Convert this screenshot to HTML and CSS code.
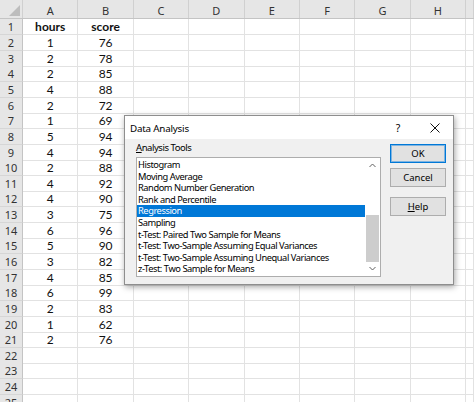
FILE: index.html
```html
<!DOCTYPE html>
<html>
<head>
<meta charset="utf-8">
<title>Data Analysis</title>
<link rel="stylesheet" href="styles.css">
</head>
<body>
<div class="app">
  <div class="sheet">
    <div class="row hdr"><div class="corner"><span class="tri"></span></div><div class="ch">A</div><div class="ch">B</div><div class="ch">C</div><div class="ch">D</div><div class="ch">E</div><div class="ch">F</div><div class="ch">G</div><div class="ch">H</div><div class="ch"></div></div>
    <div class="row"><div class="rh">1</div><div class="c b">hours</div><div class="c b">score</div><div class="c"></div><div class="c"></div><div class="c"></div><div class="c"></div><div class="c"></div><div class="c"></div><div class="c"></div></div>
    <div class="row"><div class="rh">2</div><div class="c">1</div><div class="c">76</div><div class="c"></div><div class="c"></div><div class="c"></div><div class="c"></div><div class="c"></div><div class="c"></div><div class="c"></div></div>
    <div class="row"><div class="rh">3</div><div class="c">2</div><div class="c">78</div><div class="c"></div><div class="c"></div><div class="c"></div><div class="c"></div><div class="c"></div><div class="c"></div><div class="c"></div></div>
    <div class="row"><div class="rh">4</div><div class="c">2</div><div class="c">85</div><div class="c"></div><div class="c"></div><div class="c"></div><div class="c"></div><div class="c"></div><div class="c"></div><div class="c"></div></div>
    <div class="row"><div class="rh">5</div><div class="c">4</div><div class="c">88</div><div class="c"></div><div class="c"></div><div class="c"></div><div class="c"></div><div class="c"></div><div class="c"></div><div class="c"></div></div>
    <div class="row"><div class="rh">6</div><div class="c">2</div><div class="c">72</div><div class="c"></div><div class="c"></div><div class="c"></div><div class="c"></div><div class="c"></div><div class="c"></div><div class="c"></div></div>
    <div class="row"><div class="rh">7</div><div class="c">1</div><div class="c">69</div><div class="c"></div><div class="c"></div><div class="c"></div><div class="c"></div><div class="c"></div><div class="c"></div><div class="c"></div></div>
    <div class="row"><div class="rh">8</div><div class="c">5</div><div class="c">94</div><div class="c"></div><div class="c"></div><div class="c"></div><div class="c"></div><div class="c"></div><div class="c"></div><div class="c"></div></div>
    <div class="row"><div class="rh">9</div><div class="c">4</div><div class="c">94</div><div class="c"></div><div class="c"></div><div class="c"></div><div class="c"></div><div class="c"></div><div class="c"></div><div class="c"></div></div>
    <div class="row"><div class="rh">10</div><div class="c">2</div><div class="c">88</div><div class="c"></div><div class="c"></div><div class="c"></div><div class="c"></div><div class="c"></div><div class="c"></div><div class="c"></div></div>
    <div class="row"><div class="rh">11</div><div class="c">4</div><div class="c">92</div><div class="c"></div><div class="c"></div><div class="c"></div><div class="c"></div><div class="c"></div><div class="c"></div><div class="c"></div></div>
    <div class="row"><div class="rh">12</div><div class="c">4</div><div class="c">90</div><div class="c"></div><div class="c"></div><div class="c"></div><div class="c"></div><div class="c"></div><div class="c"></div><div class="c"></div></div>
    <div class="row"><div class="rh">13</div><div class="c">3</div><div class="c">75</div><div class="c"></div><div class="c"></div><div class="c"></div><div class="c"></div><div class="c"></div><div class="c"></div><div class="c"></div></div>
    <div class="row"><div class="rh">14</div><div class="c">6</div><div class="c">96</div><div class="c"></div><div class="c"></div><div class="c"></div><div class="c"></div><div class="c"></div><div class="c"></div><div class="c"></div></div>
    <div class="row"><div class="rh">15</div><div class="c">5</div><div class="c">90</div><div class="c"></div><div class="c"></div><div class="c"></div><div class="c"></div><div class="c"></div><div class="c"></div><div class="c"></div></div>
    <div class="row"><div class="rh">16</div><div class="c">3</div><div class="c">82</div><div class="c"></div><div class="c"></div><div class="c"></div><div class="c"></div><div class="c"></div><div class="c"></div><div class="c"></div></div>
    <div class="row"><div class="rh">17</div><div class="c">4</div><div class="c">85</div><div class="c"></div><div class="c"></div><div class="c"></div><div class="c"></div><div class="c"></div><div class="c"></div><div class="c"></div></div>
    <div class="row"><div class="rh">18</div><div class="c">6</div><div class="c">99</div><div class="c"></div><div class="c"></div><div class="c"></div><div class="c"></div><div class="c"></div><div class="c"></div><div class="c"></div></div>
    <div class="row"><div class="rh">19</div><div class="c">2</div><div class="c">83</div><div class="c"></div><div class="c"></div><div class="c"></div><div class="c"></div><div class="c"></div><div class="c"></div><div class="c"></div></div>
    <div class="row"><div class="rh">20</div><div class="c">1</div><div class="c">62</div><div class="c"></div><div class="c"></div><div class="c"></div><div class="c"></div><div class="c"></div><div class="c"></div><div class="c"></div></div>
    <div class="row"><div class="rh">21</div><div class="c">2</div><div class="c">76</div><div class="c"></div><div class="c"></div><div class="c"></div><div class="c"></div><div class="c"></div><div class="c"></div><div class="c"></div></div>
    <div class="row"><div class="rh">22</div><div class="c"></div><div class="c"></div><div class="c"></div><div class="c"></div><div class="c"></div><div class="c"></div><div class="c"></div><div class="c"></div><div class="c"></div></div>
    <div class="row"><div class="rh">23</div><div class="c"></div><div class="c"></div><div class="c"></div><div class="c"></div><div class="c"></div><div class="c"></div><div class="c"></div><div class="c"></div><div class="c"></div></div>
    <div class="row"><div class="rh">24</div><div class="c"></div><div class="c"></div><div class="c"></div><div class="c"></div><div class="c"></div><div class="c"></div><div class="c"></div><div class="c"></div><div class="c"></div></div>
    <div class="row"><div class="rh">25</div><div class="c"></div><div class="c"></div><div class="c"></div><div class="c"></div><div class="c"></div><div class="c"></div><div class="c"></div><div class="c"></div><div class="c"></div></div>
  </div>

  <div class="dialog">
    <div class="titlebar">
      <span class="title">Data Analysis</span>
      <span class="qmark">?</span>
      <span class="close"><svg width="10" height="10" viewBox="0 0 10 10"><path d="M0.5 0.5 L9.5 9.5 M9.5 0.5 L0.5 9.5" stroke="#111" stroke-width="1" fill="none"/></svg></span>
    </div>
    <div class="body">
      <div class="tools">
        <div class="label"><u>A</u>nalysis Tools</div>
        <div class="listbox">
          <ul class="items">
            <li>Histogram</li>
            <li>Moving Average</li>
            <li>Random Number Generation</li>
            <li>Rank and Percentile</li>
            <li class="sel">Regression</li>
            <li>Sampling</li>
            <li>t-Test: Paired Two Sample for Means</li>
            <li>t-Test: Two-Sample Assuming Equal Variances</li>
            <li>t-Test: Two-Sample Assuming Unequal Variances</li>
            <li>z-Test: Two Sample for Means</li>
          </ul>
          <div class="scrollbar">
            <div class="arrow"><svg width="7" height="5" viewBox="0 0 7 5"><path d="M0.5 4 L3.5 1 L6.5 4" stroke="#606060" stroke-width="1" fill="none"/></svg></div>
            <div class="track"><div class="thumb"></div></div>
            <div class="arrow"><svg width="7" height="5" viewBox="0 0 7 5"><path d="M0.5 1 L3.5 4 L6.5 1" stroke="#606060" stroke-width="1" fill="none"/></svg></div>
          </div>
        </div>
      </div>
      <div class="buttons">
        <div class="btn default">OK</div>
        <div class="btn">Cancel</div>
        <div class="btn gap"><u>H</u>elp</div>
      </div>
    </div>
  </div>
</div>
</body>
</html>
```

FILE: styles.css
```css
html, body {
  margin: 0;
  padding: 0;
  background: #ffffff;
}
.app {
  position: relative;
  width: 474px;
  height: 402px;
  overflow: hidden;
}
.sheet {
  font-family: Lato, "Noto Sans", sans-serif;
  color: #111;
}
.row {
  display: grid;
  grid-template-columns: 23px repeat(8, 55.4px) 1fr;
  height: 15.65px;
}
.row.hdr {
  height: 19.4px;
  background: #e6e6e6;
  border-bottom: 1px solid #c4c4c4;
  box-sizing: border-box;
}
.corner {
  position: relative;
  border-right: 1px solid #d0d0d0;
}
.tri {
  position: absolute;
  right: 2px;
  bottom: 2px;
  width: 0;
  height: 0;
  border-left: 11px solid transparent;
  border-bottom: 11px solid #bdbdbd;
}
.ch {
  font-family: "Noto Sans", sans-serif;
  font-size: 11px;
  color: #333;
  text-align: center;
  padding-top: 4px;
  line-height: 14px;
  border-right: 1px solid #d0d0d0;
}
.rh {
  background: #e6e6e6;
  border-right: 1px solid #c4c4c4;
  border-bottom: 1px solid #d6d6d6;
  font-family: "Noto Sans", sans-serif;
  font-size: 11px;
  color: #333;
  text-align: center;
  line-height: 15px;
  box-sizing: border-box;
}
.c {
  border-right: 1px solid #e2e2e2;
  border-bottom: 1px solid #e2e2e2;
  font-size: 12px;
  text-align: center;
  line-height: 15px;
  box-sizing: border-box;
}
.c.b {
  font-weight: 700;
}

/* Dialog */
.dialog {
  position: absolute;
  left: 124px;
  top: 115px;
  width: 330px;
  height: 170px;
  box-sizing: border-box;
  border: 1px solid #8e8e8e;
  background: #f0f0f0;
  box-shadow: 1px 2px 6px rgba(0,0,0,0.35);
  font-family: "Noto Sans", sans-serif;
  font-size: 9.5px;
  color: #000;
}
.titlebar {
  display: flex;
  align-items: center;
  height: 23px;
  background: #ffffff;
  padding-left: 5px;
}
.title {
  flex: 1;
  font-size: 9.8px;
  letter-spacing: -0.2px;
  padding-top: 1px;
}
.qmark {
  font-size: 10.5px;
  width: 12px;
  margin-right: 26px;
  text-align: center;
  padding-top: 1px;
}
.close {
  display: flex;
  width: 10px;
  height: 10px;
  margin-right: 13px;
}
.body {
  display: flex;
  gap: 9px;
  padding: 3px 0 0 11px;
}
.label {
  line-height: 12px;
  height: 12px;
  margin-bottom: 3px;
  letter-spacing: -0.45px;
}
.listbox {
  display: flex;
  width: 245px;
  height: 120px;
  box-sizing: border-box;
  border: 1px solid #adadad;
  background: #ffffff;
}
.items {
  list-style: none;
  margin: 0;
  padding: 1px 0 0 0;
  width: 228px;
  font-size: 9.3px;
  letter-spacing: -0.45px;
}
.items li {
  height: 11.6px;
  line-height: 11.6px;
  padding-left: 1px;
  white-space: nowrap;
  overflow: hidden;
}
.items li.sel {
  background: #0078d7;
  color: #ffffff;
}
.scrollbar {
  width: 15px;
  display: flex;
  flex-direction: column;
}
.arrow {
  height: 15px;
  display: flex;
  align-items: center;
  justify-content: center;
}
.track {
  flex: 1;
  position: relative;
}
.thumb {
  position: absolute;
  left: 1px;
  top: 42px;
  width: 13px;
  height: 47px;
  background: #cdcdcd;
}
.buttons {
  display: flex;
  flex-direction: column;
  gap: 5px;
  padding-top: 2px;
}
.btn {
  width: 56px;
  height: 19px;
  box-sizing: border-box;
  border: 1px solid #adadad;
  background: #e1e1e1;
  text-align: center;
  line-height: 17px;
}
.btn.default {
  border: 1px solid #0078d7;
  box-shadow: inset 0 0 0 1px #7fb4e0;
}
.btn.gap {
  margin-top: 5px;
}
```
